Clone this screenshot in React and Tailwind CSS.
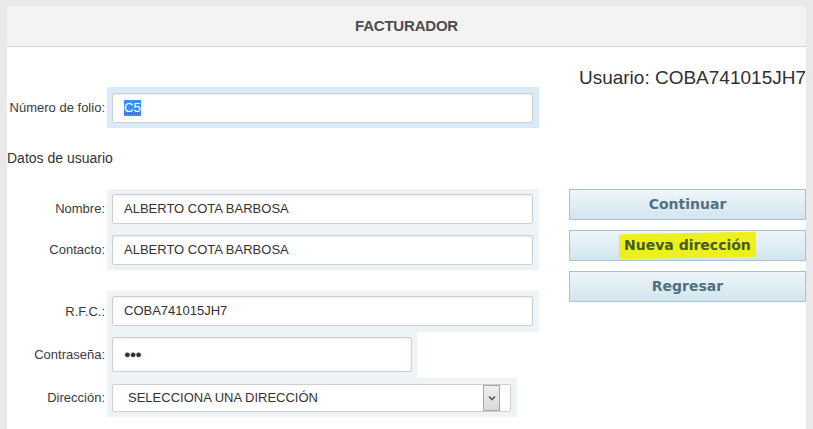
import React from "react";

const font = { fontFamily: '"Liberation Sans", Arial, sans-serif' };

function Field({ children, className = "" }) {
  return (
    <div
      className={`bg-white border border-[#cfcfcf] rounded-[2px] shadow-[inset_0_1px_2px_rgba(0,0,0,0.08)] flex items-center pl-[11px] text-[13px] text-[#333] ${className}`}
    >
      {children}
    </div>
  );
}

function Label({ children }) {
  return (
    <div className="w-[100px] shrink-0 text-right pr-[2px] text-[13px] text-[#3a3a3a]">
      {children}
    </div>
  );
}

function Btn({ children }) {
  return (
    <div
      className="h-[31px] w-[237px] border border-[#a9c2ce] bg-gradient-to-b from-[#eef6fa] to-[#d2e5ee] flex items-center justify-center text-[14px] font-bold text-[#52707f]"
      style={{ fontFamily: '"DejaVu Sans", Verdana, sans-serif' }}
    >
      {children}
    </div>
  );
}

export default function App() {
  return (
    <div className="w-[813px] h-[429px] overflow-hidden bg-[#e9e9e9] pt-[6px] pl-[7px]" style={font}>
      <div className="w-[799px] h-[423px] bg-white rounded-t-[4px] overflow-hidden">
        <div className="h-[41px] bg-[#f3f3f3] border-b border-[#d6d6d6] flex items-center justify-center">
          <span className="text-[15px] font-bold text-[#4d4d4d] tracking-[-0.2px]">FACTURADOR</span>
        </div>
        <div className="flex">
          {/* left column */}
          <div className="w-[532px] shrink-0">
            <div className="mt-[40px] flex items-center">
              <Label>Número de folio:</Label>
              <div className="bg-[#dbeaf7] pl-[5px] pr-[6px] pt-[6px] pb-[5px]">
                <Field className="w-[421px] h-[30px] border-[#80bde6]">
                  <span className="bg-[#3390ff] text-white leading-[16px] underline decoration-dotted decoration-[#d02020]">C5</span>
                </Field>
              </div>
            </div>

            <div className="mt-[20px] h-[20px] text-[14px] text-[#333] leading-[20px]">Datos de usuario</div>

            <div className="mt-[21px] flex">
              <div className="w-[100px] shrink-0 flex flex-col pt-[5px] gap-[11px]">
                <div className="h-[30px] flex items-center justify-end pr-[2px] text-[13px] text-[#3a3a3a]">Nombre:</div>
                <div className="h-[30px] flex items-center justify-end pr-[2px] text-[13px] text-[#3a3a3a]">Contacto:</div>
              </div>
              <div className="bg-[#eef3f6] pl-[5px] pr-[6px] py-[5px] flex flex-col gap-[11px]">
                <Field className="w-[421px] h-[30px]">ALBERTO COTA BARBOSA</Field>
                <Field className="w-[421px] h-[30px]">ALBERTO COTA BARBOSA</Field>
              </div>
            </div>

            <div className="mt-[21px] flex flex-col">
              <div className="flex items-center">
                <Label>R.F.C.:</Label>
                <div className="bg-[#eef3f6] pl-[5px] pr-[6px] pt-[5px] pb-[6px]">
                  <Field className="w-[421px] h-[30px]">COBA741015JH7</Field>
                </div>
              </div>
              <div className="flex items-center">
                <Label>Contraseña:</Label>
                <div className="bg-[#eef3f6] pl-[5px] pr-[5px] pt-[5px] pb-[6px]">
                  <Field className="w-[300px] h-[35px]">
                    <span className="text-[11px] tracking-[-1px] text-[#333]">●●●</span>
                  </Field>
                </div>
              </div>
              <div className="flex items-center">
                <Label>Dirección:</Label>
                <div className="bg-[#eef3f6] pl-[5px] pr-[6px] pt-[6px] pb-[5px]">
                  <div className="w-[399px] h-[28px] bg-white border border-[#cfcfcf] rounded-[2px] flex items-center pl-[15px] pr-[10px]">
                    <span className="flex-1 text-[13px] text-[#333]">SELECCIONA UNA DIRECCIÓN</span>
                    <div className="w-[17px] h-[26px] border border-[#a5a5a5] bg-gradient-to-b from-[#efefef] to-[#dadada] flex items-center justify-center">
                      <svg width="8" height="6" viewBox="0 0 8 6">
                        <path d="M1 1.5 L4 4.5 L7 1.5" fill="none" stroke="#555" strokeWidth="1.6" />
                      </svg>
                    </div>
                  </div>
                </div>
              </div>
            </div>
          </div>

          {/* right column */}
          <div className="ml-[30px] w-[237px] shrink-0 flex flex-col items-end">
            <div className="mt-[19px] h-[24px] text-[19px] leading-[24px] text-[#2f2f2f] whitespace-nowrap">
              Usuario: COBA741015JH7
            </div>
            <div className="mt-[99px] flex flex-col gap-[10px]">
              <Btn>Continuar</Btn>
              <Btn>
                <span className="bg-[#eef01e] text-[#475a1e] px-[5px] py-[2px] rounded-[2px] -skew-y-1 inline-block">
                  <span className="inline-block skew-y-1">Nueva dirección</span>
                </span>
              </Btn>
              <Btn>Regresar</Btn>
            </div>
          </div>
        </div>
      </div>
    </div>
  );
}
